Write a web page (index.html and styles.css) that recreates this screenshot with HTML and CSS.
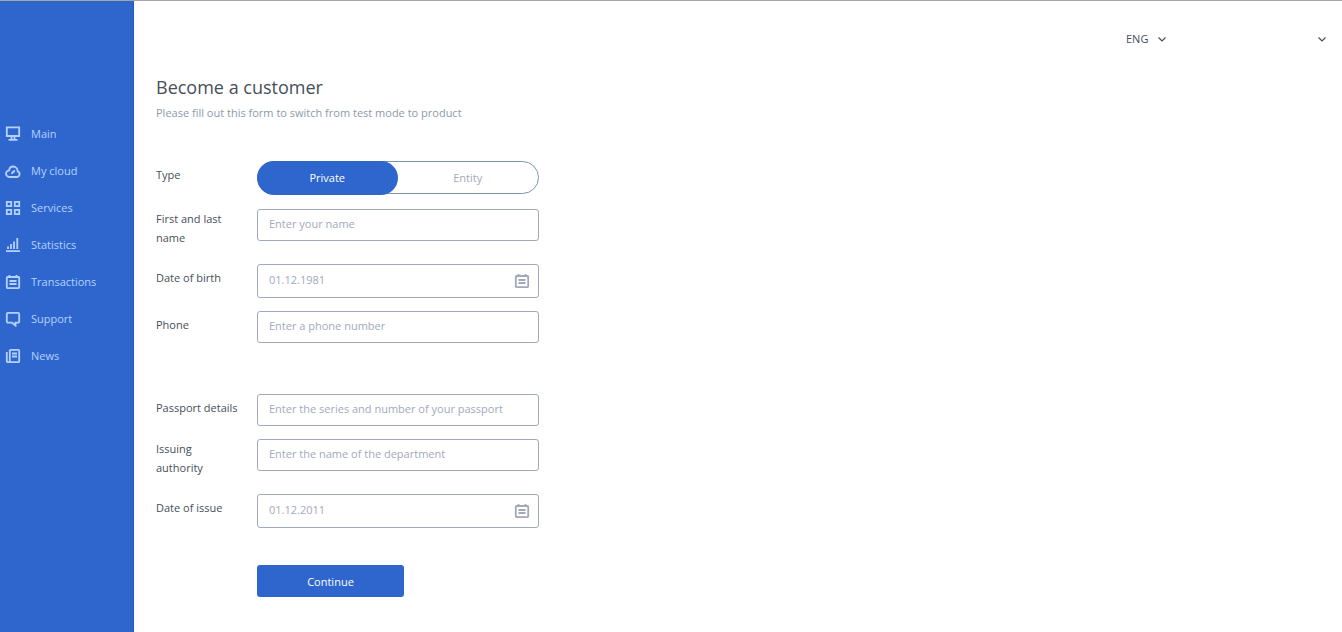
FILE: index.html
```html
<!DOCTYPE html>
<html lang="en">
<head>
<meta charset="utf-8">
<meta name="viewport" content="width=device-width, initial-scale=1">
<title>Become a customer</title>
<link rel="stylesheet" href="styles.css">
</head>
<body>
<svg class="sprite" aria-hidden="true">
  <symbol id="calendar" viewBox="0 0 16 16"><path d="M2.500 3h11a.7.7 0 0 1 .7.7v9.600a.9.9 0 0 1-.9.900H2.700a.9.9 0 0 1-.9-.900V3.700a.7.7 0 0 1 .7-.7zM4.500 1v2M11.500 1v2M4.500 7h7M4.500 10h7"/></symbol>
  <symbol id="chevron" viewBox="0 0 10 10"><path d="M1.500 3.500l3.500 3.500L8.500 3.500"/></symbol>
</svg>
<div class="app">
  <aside class="sidebar">
    <nav class="nav">
      <a class="nav-link" href="#"><svg class="icon" viewBox="0 0 16 16"><path d="M1.800 1.300h12.400v8.700H1.800zM6.500 10v3.500M9.500 10v3.500M3.500 13.800h9"/></svg>Main</a>
      <a class="nav-link" href="#"><svg class="icon" viewBox="0 0 16 16"><path d="M4.500 14h7.200a2.900 2.900 0 0 0 1-5.600C12.600 5.500 10.500 3.500 8.200 3.500 5.900 3.500 4.300 5.200 4.200 7.400a3.300 3.300 0 0 0 .3 6.600zM7 11c0-1.700 1.200-2.600 3-3"/></svg>My cloud</a>
      <a class="nav-link" href="#"><svg class="icon" viewBox="0 0 16 16"><path d="M1.800 1.800h4.400v4.400H1.800zM9.800 1.800h4.400v4.400H9.800zM1.800 9.800h4.400v4.400H1.800zM9.800 9.800h4.400v4.400H9.800z"/></svg>Services</a>
      <a class="nav-link" href="#"><svg class="icon" viewBox="0 0 16 16"><path d="M1 14.200h14M3 12V9.500M6 12V7M9 12V4.500M12.300 12V1"/></svg>Statistics</a>
      <a class="nav-link" href="#"><svg class="icon"><use href="#calendar"/></svg>Transactions</a>
      <a class="nav-link" href="#"><svg class="icon" viewBox="0 0 16 16"><path d="M3 1.800h10a1.200 1.200 0 0 1 1.200 1.200v7.500a1.200 1.200 0 0 1-1.200 1.200h-2.500v2.800l-3.500-2.800H3A1.200 1.200 0 0 1 1.800 10.500V3A1.200 1.200 0 0 1 3 1.800z"/></svg>Support</a>
      <a class="nav-link" href="#"><svg class="icon" viewBox="0 0 16 16"><path d="M4.800 1.800h8.400a1 1 0 0 1 1 1v10.400a1 1 0 0 1-1 1H2.800a1 1 0 0 1-1-1V4M4.800 1.800v12M7 5.500h5M7 8.500h5"/></svg>News</a>
    </nav>
  </aside>
  <div class="page">
    <header class="topbar">
      <div class="language">
        <select class="language-select" aria-label="Language"><option>ENG</option></select>
        <svg class="chevron"><use href="#chevron"/></svg>
      </div>
      <button class="account" type="button" aria-label="Account menu"><svg class="chevron"><use href="#chevron"/></svg></button>
    </header>
    <main class="content">
      <h1 class="title">Become a customer</h1>
      <p class="subtitle">Please fill out this form to switch from test mode to product</p>
      <form class="form">
        <div class="row row-type">
          <span class="label" id="type-label">Type</span>
          <div class="segmented" role="radiogroup" aria-labelledby="type-label">
            <label class="segment"><input class="segment-input" type="radio" name="type" checked>Private</label>
            <label class="segment"><input class="segment-input" type="radio" name="type">Entity</label>
          </div>
        </div>
        <div class="row">
          <label class="label label-tall" for="name">First and last name</label>
          <input class="input" id="name" type="text" placeholder="Enter your name">
        </div>
        <div class="row">
          <label class="label" for="birth">Date of birth</label>
          <div class="date">
            <input class="date-input" id="birth" type="text" placeholder="01.12.1981">
            <svg class="icon"><use href="#calendar"/></svg>
          </div>
        </div>
        <div class="row">
          <label class="label" for="phone">Phone</label>
          <input class="input" id="phone" type="tel" placeholder="Enter a phone number">
        </div>
        <div class="row row-section">
          <label class="label" for="passport">Passport details</label>
          <input class="input" id="passport" type="text" placeholder="Enter the series and number of your passport">
        </div>
        <div class="row">
          <label class="label label-tall" for="authority">Issuing authority</label>
          <input class="input" id="authority" type="text" placeholder="Enter the name of the department">
        </div>
        <div class="row">
          <label class="label" for="issue">Date of issue</label>
          <div class="date">
            <input class="date-input" id="issue" type="text" placeholder="01.12.2011">
            <svg class="icon"><use href="#calendar"/></svg>
          </div>
        </div>
        <div class="row row-actions">
          <button class="submit" type="submit">Continue</button>
        </div>
      </form>
    </main>
  </div>
</div>
</body>
</html>
```

FILE: styles.css
```css
* { box-sizing: border-box; }

body {
  margin: 0;
  border-top: 1px solid #a6a6a6;
  background: #fff;
  color: #464f59;
  font: 11px/19px "Open Sans", "Noto Sans", sans-serif;
}

input, select, button { font: inherit; }

.sprite { display: none; }

.app {
  display: flex;
  min-height: calc(100vh - 1px);
}

.sidebar {
  flex: 0 0 134px;
  padding-top: 114px;
  background: #2e66ce;
  border-right: 1px solid #2856b0;
}

.nav { display: flex; flex-direction: column; }

.nav-link {
  display: flex;
  align-items: center;
  gap: 10px;
  height: 37px;
  padding-left: 5px;
  color: #b4d2ff;
  text-decoration: none;
}

.icon {
  flex: none;
  width: 16px;
  height: 16px;
  fill: none;
  stroke: currentColor;
  stroke-width: 1.8;
}

.page { flex: 1; min-width: 0; }

.topbar {
  display: flex;
  justify-content: flex-end;
  align-items: center;
  gap: 150px;
  height: 75px;
  padding-right: 15px;
}

.language { display: flex; align-items: center; }

.language-select {
  width: 31px;
  padding: 0;
  appearance: none;
  border: 0;
  background: none;
  color: inherit;
}

.chevron {
  display: block;
  width: 10px;
  height: 10px;
  fill: none;
  stroke: #464f59;
  stroke-width: 1.2;
}

.account { padding: 0; border: 0; background: none; }

.content { padding: 0 22px 34px; }

.title {
  margin: 0;
  font-size: 18px;
  font-weight: 400;
  line-height: 22px;
}

.subtitle { margin: 5px 0 39px; color: #8e99ab; }

.form {
  display: flex;
  flex-direction: column;
  gap: 13px;
  max-width: 383px;
}

.row { display: flex; align-items: flex-start; }
.row-type { min-height: 35px; }
.row-section { margin-top: 38px; }
.row-actions { margin-top: 24px; padding-left: 101px; }

.label { flex: 0 0 101px; padding: 4px 8px 0 0; }
.label-tall { padding: 0 30px 4px 0; }

.segmented {
  display: flex;
  flex: 1;
  height: 33px;
  border: 1px solid #7f95ae;
  border-radius: 17px;
}

.segment {
  flex: 1;
  color: #a3a9ba;
  line-height: 32px;
  text-align: center;
}

.segment:has(:checked) {
  margin: -1px 0 -2px -1px;
  border-radius: 17px;
  background: #2e66ce;
  color: #fff;
  line-height: 34px;
}

.segment-input { position: absolute; opacity: 0; margin: 0; }

.input, .date {
  flex: 1;
  min-width: 0;
  height: 32px;
  border: 1px solid #a3a9bc;
  border-radius: 3px;
  background: #fff;
}

.input { padding: 0 11px 3px; color: inherit; }

.date {
  display: flex;
  align-items: center;
  height: 34px;
  padding: 0 8px 0 11px;
  color: #a0a8ba;
}

.date-input {
  flex: 1;
  min-width: 0;
  padding: 0 0 3px;
  border: 0;
  background: none;
  color: #464f59;
}

::placeholder { color: #a3a9ba; opacity: 1; }

.submit {
  width: 147px;
  height: 32px;
  padding: 0;
  border: 0;
  border-radius: 3px;
  background: #2e66ce;
  color: #fff;
}
```
